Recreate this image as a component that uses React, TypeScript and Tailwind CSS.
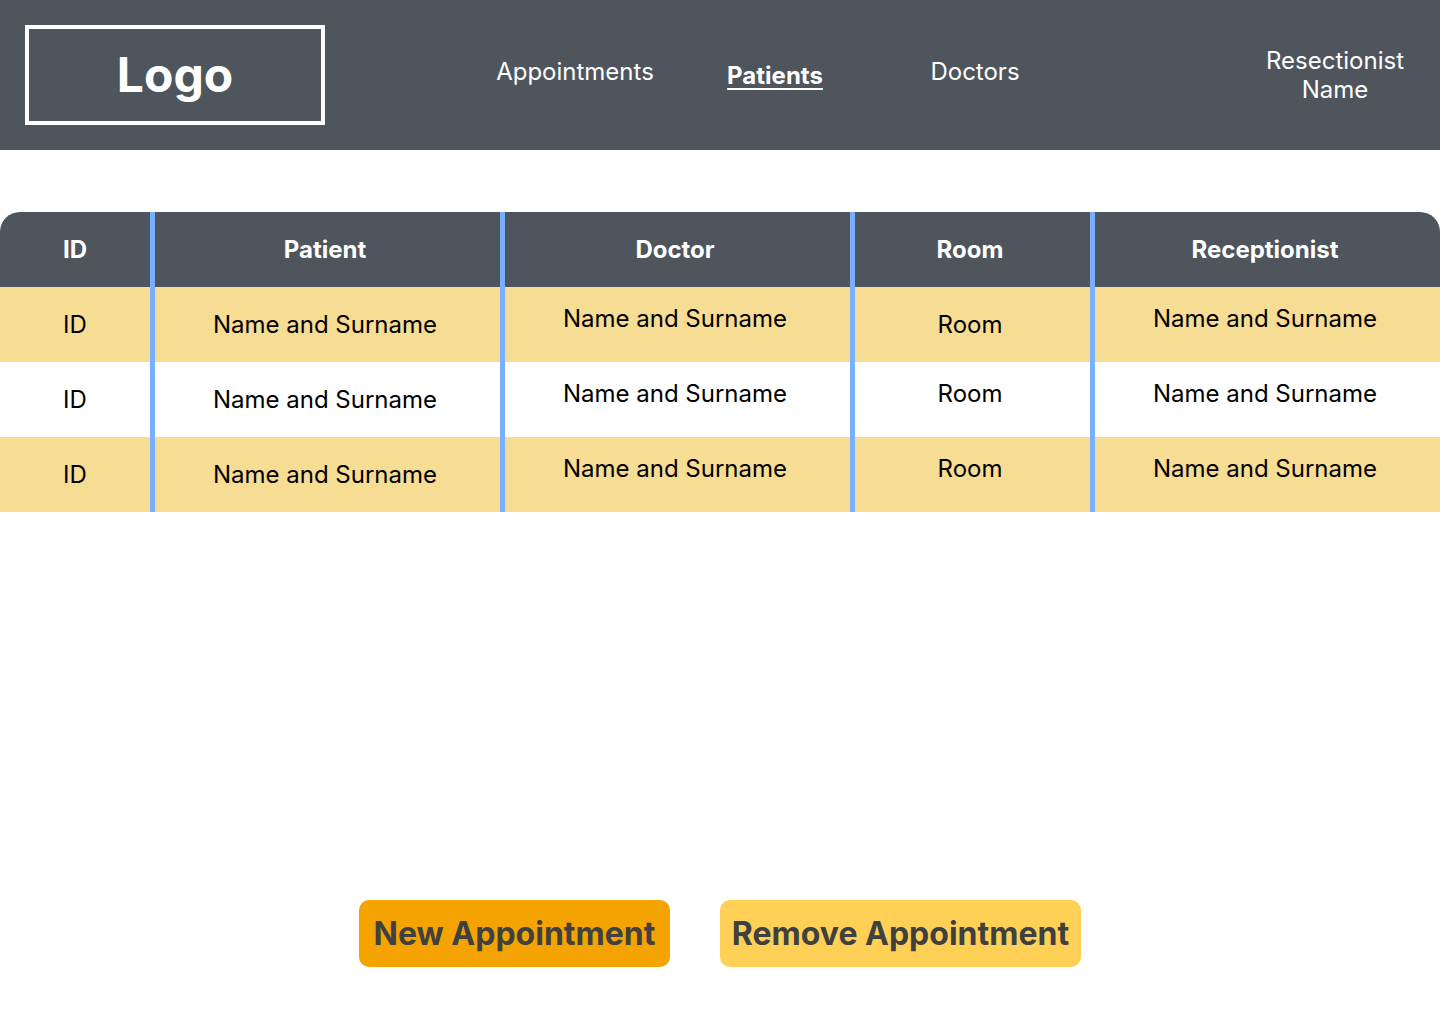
const fullName = "Name and Surname";

const rows = [
  { id: "ID", patient: fullName, doctor: fullName, room: "Room", receptionist: fullName, roomClass: "pb-0" },
  { id: "ID", patient: fullName, doctor: fullName, room: "Room", receptionist: fullName, roomClass: "pb-3" },
  { id: "ID", patient: fullName, doctor: fullName, room: "Room", receptionist: fullName, roomClass: "pb-3" },
];

const divider = "border-l-[5px] border-[#7aafff]";

export default function App() {
  return (
    <div className="flex min-h-screen flex-col bg-white font-['Inter',sans-serif] text-2xl leading-[29px] text-black">
      <header className="flex items-center bg-[#4e555d] p-[25px] text-white">
        <a
          href="#home"
          className="flex h-[100px] w-[300px] items-center justify-center border-4 border-white text-5xl font-bold"
        >
          Logo
        </a>
        <nav className="mr-auto ml-[150px] flex items-center text-center">
          <a href="#appointments" className="w-[200px] pb-2">Appointments</a>
          <a href="#patients" aria-current="page" className="w-[200px] font-bold underline decoration-2 underline-offset-4">
            Patients
          </a>
          <a href="#doctors" className="w-[200px] pb-2">Doctors</a>
        </nav>
        <p className="w-[160px] text-center">
          Resectionist
          <br />
          Name
        </p>
      </header>

      <main className="flex flex-1 flex-col justify-between pt-[62px] pb-[57px]">
        <div className="overflow-hidden rounded-t-[20px]">
          <table className="w-full table-fixed border-separate border-spacing-0 text-center">
            <colgroup>
              <col className="w-[150px]" />
              <col className="w-[350px]" />
              <col className="w-[350px]" />
              <col className="w-[240px]" />
              <col className="w-[350px]" />
            </colgroup>
            <thead className="bg-[#4e555d] text-white">
              <tr className="h-[75px]">
                <th scope="col" className="p-0 font-bold">ID</th>
                <th scope="col" className={`${divider} p-0 pr-[5px] font-bold`}>Patient</th>
                <th scope="col" className={`${divider} p-0 pr-[5px] font-bold`}>Doctor</th>
                <th scope="col" className={`${divider} p-0 pr-[5px] font-bold`}>Room</th>
                <th scope="col" className={`${divider} p-0 pr-[5px] font-bold`}>Receptionist</th>
              </tr>
            </thead>
            <tbody>
              {rows.map((row, i) => (
                <tr key={i} className="h-[75px] odd:bg-[#f7dc94]">
                  <td className="p-0">{row.id}</td>
                  <td className={`${divider} p-0 pr-[5px]`}>{row.patient}</td>
                  <td className={`${divider} p-0 pr-[5px] pb-3`}>{row.doctor}</td>
                  <td className={`${divider} p-0 pr-[5px] ${row.roomClass}`}>{row.room}</td>
                  <td className={`${divider} p-0 pr-[5px] pb-3`}>{row.receptionist}</td>
                </tr>
              ))}
            </tbody>
          </table>
        </div>

        <div className="flex justify-center gap-[50px] text-[32px] leading-[39px] font-bold text-[#404040]">
          <button type="button" className="h-[67px] w-[311px] rounded-[10px] bg-[#f5a300] whitespace-nowrap">
            New Appointment
          </button>
          <button type="button" className="h-[67px] w-[361px] rounded-[10px] bg-[#ffd056] whitespace-nowrap">
            Remove Appointment
          </button>
        </div>
      </main>
    </div>
  );
}
